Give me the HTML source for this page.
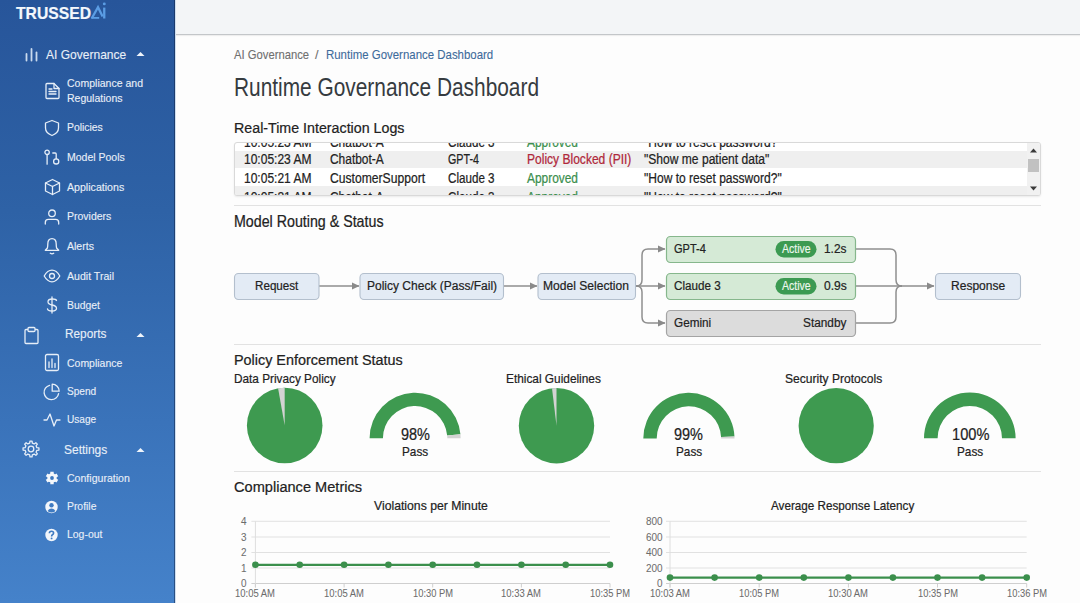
<!DOCTYPE html><html><head><meta charset="utf-8"><style>
*{margin:0;padding:0;box-sizing:border-box}
html,body{width:1080px;height:603px;overflow:hidden;background:#fdfdfd;font-family:"Liberation Sans",sans-serif}
.t{position:absolute;white-space:nowrap;line-height:1;transform-origin:0 0;-webkit-text-stroke:0.22px currentColor}
.ab{position:absolute;overflow:visible}
#sb{position:absolute;left:0;top:0;width:175px;height:603px;background:linear-gradient(180deg,#27559a 0%,#2e62a6 35%,#3a73ba 70%,#4582ca 100%);border-right:1px solid rgba(15,30,60,0.5)}
#vl{position:absolute;left:175px;top:0;width:1px;height:603px;background:#cfdff1}
#hdr{position:absolute;left:176px;top:0;width:904px;height:35px;background:#f3f5f7;border-bottom:1px solid #c3c6c9;box-shadow:0 1px 1px rgba(0,0,0,0.06)}
#logs{position:absolute;left:234px;top:142px;width:807px;height:54px;overflow:hidden;background:#fff;border:1px solid #d9d9d9;border-radius:3px;box-shadow:0 1px 2px rgba(0,0,0,0.08)}
#logs .t{}
.rowbg{position:absolute;left:0;width:100%;background:#efefef}
#sbtrack{position:absolute;left:792px;top:0;width:13px;height:54px;background:#f1f1f1}
#sbthumb{position:absolute;left:793px;top:16px;width:11px;height:13px;background:#c1c1c1}
.hr{position:absolute;left:234px;width:807px;height:1px;background:#e2e2e2}
</style></head><body><div id="sb"></div>
<div class="t" style="left:16.00px;top:5.21px;font-size:17.00px;color:#f4f8fc;transform:scaleX(0.9233);font-weight:bold;-webkit-text-stroke:0.2px;">TRUSSED</div>
<svg class="ab" style="left:0;top:0" width="120" height="30" viewBox="0 0 120 30">
<path d="M91.8 18.2 L98 7.3 L102.6 16.6" fill="none" stroke="#5b9de4" stroke-width="2.3" stroke-linejoin="miter"/>
<path d="M91.2 17.9 H99.2" stroke="#5b9de4" stroke-width="1.8"/>
<rect x="103.1" y="7.6" width="2.3" height="10.9" fill="#5b9de4"/>
<circle cx="104.3" cy="3.9" r="1.45" fill="#5b9de4"/>
</svg>
<div class="t" style="left:45.90px;top:47.62px;font-size:13.20px;color:#e8eff8;transform:scaleX(0.9120);-webkit-text-stroke:0.12px;">AI Governance</div>
<svg class="ab" style="left:136px;top:51px" width="9" height="6" viewBox="0 0 9 6"><path d="M0.5 5 L4.5 1 L8.5 5 Z" fill="#f0f5fb"/></svg>
<svg class="ab" style="left:24px;top:47px" width="15" height="15" viewBox="0 0 15 15">
<g stroke="#c9daee" stroke-width="1.8" stroke-linecap="round"><path d="M2.5 7 V13.5"/><path d="M7.5 2 V13.5"/><path d="M12.5 5.5 V13.5"/></g></svg>
<div class="t" style="left:67.10px;top:77.86px;font-size:11.50px;color:#e8eff8;transform:scaleX(0.9145);-webkit-text-stroke:0.12px;">Compliance and</div>
<div class="t" style="left:67.10px;top:93.16px;font-size:11.50px;color:#e8eff8;transform:scaleX(0.9138);-webkit-text-stroke:0.12px;">Regulations</div>
<div class="t" style="left:67.10px;top:121.96px;font-size:11.50px;color:#e8eff8;transform:scaleX(0.9034);-webkit-text-stroke:0.12px;">Policies</div>
<div class="t" style="left:67.10px;top:151.76px;font-size:11.50px;color:#e8eff8;transform:scaleX(0.9133);-webkit-text-stroke:0.12px;">Model Pools</div>
<div class="t" style="left:67.10px;top:181.66px;font-size:11.50px;color:#e8eff8;transform:scaleX(0.9224);-webkit-text-stroke:0.12px;">Applications</div>
<div class="t" style="left:67.10px;top:211.36px;font-size:11.50px;color:#e8eff8;transform:scaleX(0.9120);-webkit-text-stroke:0.12px;">Providers</div>
<div class="t" style="left:67.10px;top:240.76px;font-size:11.50px;color:#e8eff8;transform:scaleX(0.9151);-webkit-text-stroke:0.12px;">Alerts</div>
<div class="t" style="left:67.10px;top:270.56px;font-size:11.50px;color:#e8eff8;transform:scaleX(0.9192);-webkit-text-stroke:0.12px;">Audit Trail</div>
<div class="t" style="left:67.10px;top:300.06px;font-size:11.50px;color:#e8eff8;transform:scaleX(0.9026);-webkit-text-stroke:0.12px;">Budget</div>
<div class="t" style="left:65.20px;top:327.45px;font-size:13.40px;color:#e8eff8;transform:scaleX(0.8824);-webkit-text-stroke:0.12px;">Reports</div>
<svg class="ab" style="left:136px;top:332px" width="9" height="6" viewBox="0 0 9 6"><path d="M0.5 5 L4.5 1 L8.5 5 Z" fill="#f0f5fb"/></svg>
<div class="t" style="left:67.00px;top:357.56px;font-size:11.50px;color:#e8eff8;transform:scaleX(0.9107);-webkit-text-stroke:0.12px;">Compliance</div>
<div class="t" style="left:67.00px;top:385.86px;font-size:11.50px;color:#e8eff8;transform:scaleX(0.8781);-webkit-text-stroke:0.12px;">Spend</div>
<div class="t" style="left:67.00px;top:414.16px;font-size:11.50px;color:#e8eff8;transform:scaleX(0.8784);-webkit-text-stroke:0.12px;">Usage</div>
<div class="t" style="left:64.10px;top:442.55px;font-size:13.40px;color:#e8eff8;transform:scaleX(0.8943);-webkit-text-stroke:0.12px;">Settings</div>
<svg class="ab" style="left:136px;top:447px" width="9" height="6" viewBox="0 0 9 6"><path d="M0.5 5 L4.5 1 L8.5 5 Z" fill="#f0f5fb"/></svg>
<div class="t" style="left:67.10px;top:473.16px;font-size:11.50px;color:#e8eff8;transform:scaleX(0.9181);-webkit-text-stroke:0.12px;">Configuration</div>
<div class="t" style="left:67.10px;top:501.16px;font-size:11.50px;color:#e8eff8;transform:scaleX(0.9019);-webkit-text-stroke:0.12px;">Profile</div>
<div class="t" style="left:67.10px;top:529.36px;font-size:11.50px;color:#e8eff8;transform:scaleX(0.9076);-webkit-text-stroke:0.12px;">Log-out</div>
<svg class="ab" style="left:44.0px;top:82.0px" width="17" height="18" viewBox="0 0 17 18"><g stroke="#e6eef8" fill="none" stroke-width="1.3" stroke-linecap="round" stroke-linejoin="round"><path d="M2 2.5 Q2 1.5 3 1.5 H10 L15 6.5 V15.5 Q15 16.5 14 16.5 H3 Q2 16.5 2 15.5 Z"/><path d="M10 1.5 V6.5 H15"/><path d="M5 9.5 H12 M5 12 H12 M5 7 H8"/></g></svg>
<svg class="ab" style="left:44.0px;top:119.0px" width="16" height="18" viewBox="0 0 16 18"><path stroke="#e6eef8" fill="none" stroke-width="1.3" stroke-linecap="round" stroke-linejoin="round" d="M8 1.5 L14.5 4 V9 Q14.5 14 8 16.5 Q1.5 14 1.5 9 V4 Z"/></svg>
<svg class="ab" style="left:44.0px;top:149.0px" width="17" height="17" viewBox="0 0 17 17"><g stroke="#e6eef8" fill="none" stroke-width="1.3" stroke-linecap="round" stroke-linejoin="round"><circle cx="3.1" cy="3.3" r="2.2"/><path d="M3.1 5.5 V15.2"/><circle cx="12.2" cy="12.4" r="2.6"/><path d="M8.8 4 H11.2 Q12.2 4 12.2 5 V9.8"/></g></svg>
<svg class="ab" style="left:44.0px;top:178.0px" width="17" height="18" viewBox="0 0 17 18"><g stroke="#e6eef8" fill="none" stroke-width="1.3" stroke-linecap="round" stroke-linejoin="round"><path d="M8.5 1.5 L15.5 5 V13 L8.5 16.5 L1.5 13 V5 Z"/><path d="M1.5 5 L8.5 8.5 L15.5 5 M8.5 8.5 V16.5"/></g></svg>
<svg class="ab" style="left:44.0px;top:209.0px" width="16" height="16" viewBox="0 0 16 16"><g stroke="#e6eef8" fill="none" stroke-width="1.3" stroke-linecap="round" stroke-linejoin="round"><circle cx="8" cy="4.3" r="3.3"/><path d="M1.3 15 V13.5 Q1.3 10.4 4.4 10.4 H11.6 Q14.7 10.4 14.7 13.5 V15"/></g></svg>
<svg class="ab" style="left:44.0px;top:237.0px" width="16" height="18" viewBox="0 0 16 18"><g stroke="#e6eef8" fill="none" stroke-width="1.3" stroke-linecap="round" stroke-linejoin="round"><path d="M1.3 13.3 H14.7 L12.6 11 Q12.2 9.5 12.2 7 Q12.2 1.6 8 1.6 Q3.8 1.6 3.8 7 Q3.8 9.5 3.4 11 Z"/><path d="M6.3 16.3 Q8 17.3 9.7 16.3"/></g></svg>
<svg class="ab" style="left:43.0px;top:269.0px" width="18" height="14" viewBox="0 0 18 14"><g stroke="#e6eef8" fill="none" stroke-width="1.3" stroke-linecap="round" stroke-linejoin="round"><path d="M1.2 7 Q4.5 1.2 9 1.2 Q13.5 1.2 16.8 7 Q13.5 12.8 9 12.8 Q4.5 12.8 1.2 7 Z"/><circle cx="9" cy="7" r="2.5"/></g></svg>
<svg class="ab" style="left:45.0px;top:296.0px" width="14" height="18" viewBox="0 0 14 18"><g stroke="#e6eef8" fill="none" stroke-width="1.3" stroke-linecap="round" stroke-linejoin="round"><path d="M7 1 V17"/><path d="M11.5 4.5 Q11 3 7.5 3 Q3 3 3 5.8 Q3 8.3 7 9 Q11.5 9.7 11.5 12.3 Q11.5 15 7 15 Q3 15 2.5 13"/></g></svg>
<svg class="ab" style="left:23.0px;top:326.0px" width="17" height="19" viewBox="0 0 17 19"><g stroke="#e6eef8" fill="none" stroke-width="1.3" stroke-linecap="round" stroke-linejoin="round"><path d="M4.5 3.5 H3 Q2 3.5 2 4.5 V16.5 Q2 17.5 3 17.5 H14 Q15 17.5 15 16.5 V4.5 Q15 3.5 14 3.5 H12.5"/><rect x="5" y="1.5" width="7" height="4" rx="1"/></g></svg>
<svg class="ab" style="left:44.0px;top:353.0px" width="16" height="19" viewBox="0 0 16 19"><g stroke="#e6eef8" fill="none" stroke-width="1.3" stroke-linecap="round" stroke-linejoin="round"><rect x="1.5" y="1.5" width="13" height="16" rx="1.5"/><path d="M5 14.5 V9 M8 14.5 V6 M11 14.5 V10.5"/></g></svg>
<svg class="ab" style="left:43.0px;top:383.0px" width="18" height="18" viewBox="0 0 18 18"><g stroke="#e6eef8" fill="none" stroke-width="1.3" stroke-linecap="round" stroke-linejoin="round"><path d="M6.6 2.3 A7.3 7.3 0 1 0 15.6 10.6"/><path d="M9.2 8.2 V1.2 A7 7 0 0 1 16.2 8.2 Z"/></g></svg>
<svg class="ab" style="left:43.0px;top:412.0px" width="18" height="16" viewBox="0 0 18 16"><path stroke="#e6eef8" fill="none" stroke-width="1.3" stroke-linecap="round" stroke-linejoin="round" d="M1 8 H4 L7 2 L11 14 L13.5 8 H17"/></svg>
<svg class="ab" style="left:22.0px;top:440.0px" width="18" height="18" viewBox="0 0 18 18"><g stroke="#e6eef8" fill="none" stroke-width="1.3" stroke-linecap="round" stroke-linejoin="round"><path d="M7.69 3.14 L7.96 1.07 L10.04 1.07 L10.31 3.14 L12.21 3.93 L13.88 2.66 L15.34 4.12 L14.07 5.79 L14.86 7.69 L16.93 7.96 L16.93 10.04 L14.86 10.31 L14.07 12.21 L15.34 13.88 L13.88 15.34 L12.21 14.07 L10.31 14.86 L10.04 16.93 L7.96 16.93 L7.69 14.86 L5.79 14.07 L4.12 15.34 L2.66 13.88 L3.93 12.21 L3.14 10.31 L1.07 10.04 L1.07 7.96 L3.14 7.69 L3.93 5.79 L2.66 4.12 L4.12 2.66 L5.79 3.93 Z"/><circle cx="9" cy="9" r="2.8"/></g></svg>
<svg class="ab" style="left:45.0px;top:470.5px" width="14" height="14" viewBox="0 0 14 14"><g stroke="#f4f7fb" stroke-width="3.4" stroke-linecap="butt"><path d="M7 0.8 V13.2 M1.63 3.9 L12.37 10.1 M12.37 3.9 L1.63 10.1"/></g><circle cx="7" cy="7" r="4.7" fill="#f4f7fb"/><circle cx="7" cy="7" r="1.9" fill="#3c78c0"/></svg>
<svg class="ab" style="left:45.0px;top:500.0px" width="13" height="14" viewBox="0 0 13 14"><circle cx="6.5" cy="7" r="6.2" fill="#f2f6fb"/><circle cx="6.5" cy="5.2" r="2.2" fill="#3f7bc2"/><path d="M2.6 11 Q3.5 8.5 6.5 8.5 Q9.5 8.5 10.4 11 Q8.8 12.5 6.5 12.5 Q4.2 12.5 2.6 11 Z" fill="#3f7bc2"/></svg>
<svg class="ab" style="left:45.0px;top:528.0px" width="13" height="14" viewBox="0 0 13 14"><circle cx="6.5" cy="7" r="6.2" fill="#f2f6fb"/><path d="M4.4 5.3 Q4.4 3.3 6.5 3.3 Q8.6 3.3 8.6 5.1 Q8.6 6.2 7.4 6.8 Q6.6 7.3 6.6 8.5" stroke="#3f7bc2" stroke-width="1.6" fill="none"/><circle cx="6.6" cy="10.4" r="0.95" fill="#3f7bc2"/></svg>
<div id="hdr"></div><div id="vl"></div>
<div class="t" style="left:234.00px;top:48.75px;font-size:12.70px;color:#6f6f6f;transform:scaleX(0.8877);-webkit-text-stroke:0.1px;">AI Governance</div>
<div class="t" style="left:315.00px;top:48.75px;font-size:12.70px;color:#6f6f6f;-webkit-text-stroke:0.1px;">/</div>
<div class="t" style="left:325.60px;top:48.75px;font-size:12.70px;color:#3d6b9b;transform:scaleX(0.9016);-webkit-text-stroke:0.1px;">Runtime Governance Dashboard</div>
<div class="t" style="left:234.00px;top:75.43px;font-size:25.00px;color:#363b40;transform:scaleX(0.8345);-webkit-text-stroke:0;">Runtime Governance Dashboard</div>
<div class="t" style="left:234.00px;top:120.25px;font-size:15.30px;color:#222;transform:scaleX(0.9311);">Real-Time Interaction Logs</div>
<div id="logs">
<div class="rowbg" style="top:7.5px;height:17.5px"></div>
<div class="rowbg" style="top:43px;height:12px"></div>
<div class="t" style="left:9.40px;top:-7.38px;font-size:13.80px;color:#222;transform:scaleX(0.8711);">10:05:23 AM</div>
<div class="t" style="left:94.50px;top:-7.38px;font-size:13.80px;color:#222;transform:scaleX(0.8643);">Chatbot-A</div>
<div class="t" style="left:213.30px;top:-7.38px;font-size:13.80px;color:#222;transform:scaleX(0.8436);">Claude 3</div>
<div class="t" style="left:292.30px;top:-7.38px;font-size:13.80px;color:#3b8f4e;transform:scaleX(0.8633);">Approved</div>
<div class="t" style="left:409.00px;top:-7.38px;font-size:13.80px;color:#222;transform:scaleX(0.8724);">&quot;How to reset password?&quot;</div>
<div class="t" style="left:9.40px;top:10.22px;font-size:13.80px;color:#222;transform:scaleX(0.8711);">10:05:23 AM</div>
<div class="t" style="left:94.50px;top:10.22px;font-size:13.80px;color:#222;transform:scaleX(0.8643);">Chatbot-A</div>
<div class="t" style="left:213.30px;top:10.22px;font-size:13.80px;color:#222;transform:scaleX(0.7774);">GPT-4</div>
<div class="t" style="left:292.30px;top:10.22px;font-size:13.80px;color:#b0283a;transform:scaleX(0.8726);">Policy Blocked (PII)</div>
<div class="t" style="left:409.00px;top:10.22px;font-size:13.80px;color:#222;transform:scaleX(0.8745);">&quot;Show me patient data&quot;</div>
<div class="t" style="left:9.40px;top:29.12px;font-size:13.80px;color:#222;transform:scaleX(0.8711);">10:05:21 AM</div>
<div class="t" style="left:94.50px;top:29.12px;font-size:13.80px;color:#222;transform:scaleX(0.8793);">CustomerSupport</div>
<div class="t" style="left:213.30px;top:29.12px;font-size:13.80px;color:#222;transform:scaleX(0.8436);">Claude 3</div>
<div class="t" style="left:292.30px;top:29.12px;font-size:13.80px;color:#3b8f4e;transform:scaleX(0.8633);">Approved</div>
<div class="t" style="left:409.00px;top:29.12px;font-size:13.80px;color:#222;transform:scaleX(0.8724);">&quot;How to reset password?&quot;</div>
<div class="t" style="left:9.40px;top:48.02px;font-size:13.80px;color:#222;transform:scaleX(0.8711);">10:05:21 AM</div>
<div class="t" style="left:94.50px;top:48.02px;font-size:13.80px;color:#222;transform:scaleX(0.8643);">Chatbot-A</div>
<div class="t" style="left:213.30px;top:48.02px;font-size:13.80px;color:#222;transform:scaleX(0.8436);">Claude 3</div>
<div class="t" style="left:292.30px;top:48.02px;font-size:13.80px;color:#3b8f4e;transform:scaleX(0.8633);">Approved</div>
<div class="t" style="left:409.00px;top:48.02px;font-size:13.80px;color:#222;transform:scaleX(0.8724);">&quot;How to reset password?&quot;</div>
<div id="sbtrack"></div><div id="sbthumb"></div>
<svg class="ab" style="left:795px;top:5px" width="7" height="5" viewBox="0 0 7 5"><path d="M0 4.5 L3.5 0.5 L7 4.5 Z" fill="#3a3a3a"/></svg>
<svg class="ab" style="left:795px;top:43px" width="7" height="5" viewBox="0 0 7 5"><path d="M0 0.5 L3.5 4.5 L7 0.5 Z" fill="#3a3a3a"/></svg>
</div>
<div class="hr" style="top:205.0px"></div>
<div class="t" style="left:234.30px;top:213.94px;font-size:15.90px;color:#222;transform:scaleX(0.8956);">Model Routing &amp; Status</div>
<svg class="ab" style="left:0;top:0" width="1080" height="603" viewBox="0 0 1080 603">
<defs><marker id="ah" markerWidth="8" markerHeight="8" refX="7" refY="4" orient="auto" markerUnits="userSpaceOnUse"><path d="M0 0.5 L7.5 4 L0 7.5 Z" fill="#8a8a8a"/></marker></defs>
<g fill="none" stroke="#8e8e8e" stroke-width="1.5">
<path d="M319 286 H359" marker-end="url(#ah)"/>
<path d="M504 286 H537" marker-end="url(#ah)"/>
<path d="M636 286 H665" marker-end="url(#ah)"/>
<path d="M636 286 Q642 286 642 280 V255 Q642 249 648 249 H665" marker-end="url(#ah)"/>
<path d="M636 286 Q642 286 642 292 V317 Q642 323 648 323 H665" marker-end="url(#ah)"/>
<path d="M856 249 H890 Q896 249 896 255 V280 Q896 286 902 286"/>
<path d="M856 323 H890 Q896 323 896 317 V292 Q896 286 902 286"/>
<path d="M856 286 H934" marker-end="url(#ah)"/>
</g>
<g stroke-width="1">
<rect x="234.5" y="273.5" width="84.5" height="26" rx="4" fill="#e3ebf5" stroke="#b3bfcd" stroke-width="1.1"/>
<rect x="360" y="273.5" width="143.5" height="26" rx="4" fill="#e3ebf5" stroke="#b3bfcd" stroke-width="1.1"/>
<rect x="538" y="273.5" width="97.5" height="26" rx="4" fill="#e3ebf5" stroke="#b3bfcd" stroke-width="1.1"/>
<rect x="935.5" y="273.5" width="85" height="26" rx="4" fill="#e3ebf5" stroke="#b3bfcd" stroke-width="1.1"/>
<rect x="666.5" y="236.5" width="189" height="26" rx="4" fill="#d5ead6" stroke="#86b78c" stroke-width="1.2"/>
<rect x="666.5" y="273.5" width="189" height="26" rx="4" fill="#d5ead6" stroke="#86b78c" stroke-width="1.2"/>
<rect x="666.5" y="310.5" width="189" height="26" rx="4" fill="#dcdcdc" stroke="#a4a4a4" stroke-width="1.2"/>
<rect x="775.5" y="241" width="41" height="16.5" rx="8.25" fill="#3c9a52"/>
<rect x="775.5" y="278" width="41" height="16.5" rx="8.25" fill="#3c9a52"/>
</g>
</svg>
<div class="t" style="left:254.80px;top:279.20px;font-size:13.70px;color:#222;transform:scaleX(0.8505);">Request</div>
<div class="t" style="left:366.50px;top:279.20px;font-size:13.70px;color:#222;transform:scaleX(0.8770);">Policy Check (Pass/Fail)</div>
<div class="t" style="left:543.20px;top:279.20px;font-size:13.70px;color:#222;transform:scaleX(0.8822);">Model Selection</div>
<div class="t" style="left:950.76px;top:279.20px;font-size:13.70px;color:#222;transform:scaleX(0.8800);">Response</div>
<div class="t" style="left:674.30px;top:242.40px;font-size:13.70px;color:#222;transform:scaleX(0.8033);">GPT-4</div>
<div class="t" style="left:674.30px;top:279.20px;font-size:13.70px;color:#222;transform:scaleX(0.8516);">Claude 3</div>
<div class="t" style="left:674.30px;top:316.30px;font-size:13.70px;color:#222;transform:scaleX(0.8572);">Gemini</div>
<div class="t" style="left:824.30px;top:242.40px;font-size:13.70px;color:#222;transform:scaleX(0.8689);">1.2s</div>
<div class="t" style="left:824.00px;top:279.20px;font-size:13.70px;color:#222;transform:scaleX(0.8805);">0.9s</div>
<div class="t" style="left:803.40px;top:316.30px;font-size:13.70px;color:#222;transform:scaleX(0.8633);">Standby</div>
<div class="t" style="left:782.00px;top:243.30px;font-size:12.40px;color:#eef8ef;transform:scaleX(0.8470);-webkit-text-stroke:0.15px;">Active</div>
<div class="t" style="left:782.00px;top:280.10px;font-size:12.40px;color:#eef8ef;transform:scaleX(0.8470);-webkit-text-stroke:0.15px;">Active</div>
<div class="hr" style="top:343.5px"></div>
<div class="t" style="left:234.00px;top:351.83px;font-size:15.20px;color:#222;transform:scaleX(0.9469);">Policy Enforcement Status</div>
<div class="t" style="left:234.00px;top:371.68px;font-size:13.60px;color:#222;transform:scaleX(0.8673);">Data Privacy Policy</div>
<div class="t" style="left:506.10px;top:372.28px;font-size:13.60px;color:#222;transform:scaleX(0.8718);">Ethical Guidelines</div>
<div class="t" style="left:785.20px;top:371.78px;font-size:13.60px;color:#222;transform:scaleX(0.8878);">Security Protocols</div>
<svg class="ab" style="left:0;top:0" width="1080" height="603" viewBox="0 0 1080 603"><circle cx="284.7" cy="425.5" r="37.8" fill="#3e9a50"/><path d="M284.70 425.50 L284.70 387.70 A37.80 37.80 0 0 0 278.08 388.28 Z" fill="#d3d3d3"/><circle cx="556.5" cy="425.7" r="37.7" fill="#3e9a50"/><path d="M556.50 425.70 L556.50 388.00 A37.70 37.70 0 0 0 552.01 388.27 Z" fill="#d3d3d3"/><circle cx="836.2" cy="425.7" r="37.6" fill="#3e9a50"/><path d="M369.60 438.20 A45.50 45.50 0 0 1 460.44 434.35 L447.18 435.47 A32.20 32.20 0 0 0 382.90 438.20 Z" fill="#3e9a50"/><path d="M460.44 434.35 A45.50 45.50 0 0 1 460.60 438.20 L447.30 438.20 A32.20 32.20 0 0 0 447.18 435.47 Z" fill="#d3d3d3"/><path d="M643.30 438.40 A45.60 45.60 0 0 1 734.46 436.54 L721.07 437.09 A32.20 32.20 0 0 0 656.70 438.40 Z" fill="#3e9a50"/><path d="M734.46 436.54 A45.60 45.60 0 0 1 734.50 438.40 L721.10 438.40 A32.20 32.20 0 0 0 721.07 437.09 Z" fill="#d3d3d3"/><path d="M924.00 438.30 A45.80 45.80 0 0 1 1015.60 438.30 L1002.00 438.30 A32.20 32.20 0 0 0 937.60 438.30 Z" fill="#3e9a50"/></svg>
<div class="t" style="left:400.90px;top:426.69px;font-size:15.60px;color:#222;transform:scaleX(0.9288);">98%</div>
<div class="t" style="left:402.00px;top:444.92px;font-size:13.20px;color:#222;transform:scaleX(0.8928);">Pass</div>
<div class="t" style="left:674.40px;top:426.69px;font-size:15.60px;color:#222;transform:scaleX(0.9288);">99%</div>
<div class="t" style="left:675.80px;top:444.92px;font-size:13.20px;color:#222;transform:scaleX(0.8928);">Pass</div>
<div class="t" style="left:951.50px;top:426.69px;font-size:15.60px;color:#222;transform:scaleX(0.9374);">100%</div>
<div class="t" style="left:956.70px;top:444.92px;font-size:13.20px;color:#222;transform:scaleX(0.8928);">Pass</div>
<div class="hr" style="top:470.5px"></div>
<div class="t" style="left:233.90px;top:479.05px;font-size:15.30px;color:#222;transform:scaleX(0.9536);">Compliance Metrics</div>
<div class="t" style="left:374.00px;top:498.82px;font-size:13.20px;color:#222;transform:scaleX(0.9266);">Violations per Minute</div>
<div class="t" style="left:770.50px;top:498.82px;font-size:13.20px;color:#222;transform:scaleX(0.8856);">Average Response Latency</div>
<svg class="ab" style="left:0;top:0" width="1080" height="603" viewBox="0 0 1080 603"><g stroke="#e1e1e1" stroke-width="1"><path d="M251.4 521.3 H610.0"/><path d="M251.4 537.0 H610.0"/><path d="M251.4 552.5 H610.0"/><path d="M251.4 568.0 H610.0"/></g><g stroke="#cfcfcf" stroke-width="1"><path d="M251.4 583.5 H610.0"/><path d="M255.4 521.3 V587.5" stroke="#dedede"/><path d="M255.4 583.5 V587.5"/><path d="M344.1 583.5 V587.5"/><path d="M432.7 583.5 V587.5"/><path d="M521.4 583.5 V587.5"/><path d="M610.0 583.5 V587.5"/></g><path d="M255.4 564.8 H610.0" stroke="#3b8f4c" stroke-width="2.2"/><circle cx="255.4" cy="564.8" r="3.3" fill="#3b8f4c"/><circle cx="299.7" cy="564.8" r="3.3" fill="#3b8f4c"/><circle cx="344.1" cy="564.8" r="3.3" fill="#3b8f4c"/><circle cx="388.4" cy="564.8" r="3.3" fill="#3b8f4c"/><circle cx="432.7" cy="564.8" r="3.3" fill="#3b8f4c"/><circle cx="477.0" cy="564.8" r="3.3" fill="#3b8f4c"/><circle cx="521.4" cy="564.8" r="3.3" fill="#3b8f4c"/><circle cx="565.7" cy="564.8" r="3.3" fill="#3b8f4c"/><circle cx="610.0" cy="564.8" r="3.3" fill="#3b8f4c"/></svg>
<div class="t" style="left:241.47px;top:515.86px;font-size:10.80px;color:#6c6c6c;transform:scaleX(0.9200);-webkit-text-stroke:0.05px;">4</div>
<div class="t" style="left:241.47px;top:531.56px;font-size:10.80px;color:#6c6c6c;transform:scaleX(0.9200);-webkit-text-stroke:0.05px;">3</div>
<div class="t" style="left:241.47px;top:547.06px;font-size:10.80px;color:#6c6c6c;transform:scaleX(0.9200);-webkit-text-stroke:0.05px;">2</div>
<div class="t" style="left:241.47px;top:562.56px;font-size:10.80px;color:#6c6c6c;transform:scaleX(0.9200);-webkit-text-stroke:0.05px;">1</div>
<div class="t" style="left:241.47px;top:578.06px;font-size:10.80px;color:#6c6c6c;transform:scaleX(0.9200);-webkit-text-stroke:0.05px;">0</div>
<div class="t" style="left:235.40px;top:588.99px;font-size:10.40px;color:#6c6c6c;transform:scaleX(0.9103);-webkit-text-stroke:0.05px;">10:05 AM</div>
<div class="t" style="left:324.05px;top:588.99px;font-size:10.40px;color:#6c6c6c;transform:scaleX(0.9103);-webkit-text-stroke:0.05px;">10:05 AM</div>
<div class="t" style="left:412.70px;top:588.99px;font-size:10.40px;color:#6c6c6c;transform:scaleX(0.8986);-webkit-text-stroke:0.05px;">10:30 PM</div>
<div class="t" style="left:501.35px;top:588.99px;font-size:10.40px;color:#6c6c6c;transform:scaleX(0.9103);-webkit-text-stroke:0.05px;">10:33 AM</div>
<div class="t" style="left:590.00px;top:588.99px;font-size:10.40px;color:#6c6c6c;transform:scaleX(0.8986);-webkit-text-stroke:0.05px;">10:35 PM</div>
<svg class="ab" style="left:0;top:0" width="1080" height="603" viewBox="0 0 1080 603"><g stroke="#e1e1e1" stroke-width="1"><path d="M666.0 521.3 H1026.7"/><path d="M666.0 537.0 H1026.7"/><path d="M666.0 552.5 H1026.7"/><path d="M666.0 568.0 H1026.7"/></g><g stroke="#cfcfcf" stroke-width="1"><path d="M666.0 583.5 H1026.7"/><path d="M670.0 521.3 V587.5" stroke="#dedede"/><path d="M670.0 583.5 V587.5"/><path d="M759.2 583.5 V587.5"/><path d="M848.4 583.5 V587.5"/><path d="M937.5 583.5 V587.5"/><path d="M1026.7 583.5 V587.5"/></g><path d="M670.0 577.6 H1026.7" stroke="#3b8f4c" stroke-width="2.2"/><circle cx="670.0" cy="577.6" r="3.3" fill="#3b8f4c"/><circle cx="714.6" cy="577.6" r="3.3" fill="#3b8f4c"/><circle cx="759.2" cy="577.6" r="3.3" fill="#3b8f4c"/><circle cx="803.8" cy="577.6" r="3.3" fill="#3b8f4c"/><circle cx="848.4" cy="577.6" r="3.3" fill="#3b8f4c"/><circle cx="892.9" cy="577.6" r="3.3" fill="#3b8f4c"/><circle cx="937.5" cy="577.6" r="3.3" fill="#3b8f4c"/><circle cx="982.1" cy="577.6" r="3.3" fill="#3b8f4c"/><circle cx="1026.7" cy="577.6" r="3.3" fill="#3b8f4c"/></svg>
<div class="t" style="left:645.72px;top:515.86px;font-size:10.80px;color:#6c6c6c;transform:scaleX(0.9200);-webkit-text-stroke:0.05px;">800</div>
<div class="t" style="left:645.72px;top:531.56px;font-size:10.80px;color:#6c6c6c;transform:scaleX(0.9200);-webkit-text-stroke:0.05px;">600</div>
<div class="t" style="left:645.72px;top:547.06px;font-size:10.80px;color:#6c6c6c;transform:scaleX(0.9200);-webkit-text-stroke:0.05px;">400</div>
<div class="t" style="left:645.72px;top:562.56px;font-size:10.80px;color:#6c6c6c;transform:scaleX(0.9200);-webkit-text-stroke:0.05px;">200</div>
<div class="t" style="left:656.77px;top:578.06px;font-size:10.80px;color:#6c6c6c;transform:scaleX(0.9200);-webkit-text-stroke:0.05px;">0</div>
<div class="t" style="left:650.00px;top:588.99px;font-size:10.40px;color:#6c6c6c;transform:scaleX(0.9103);-webkit-text-stroke:0.05px;">10:03 AM</div>
<div class="t" style="left:739.17px;top:588.99px;font-size:10.40px;color:#6c6c6c;transform:scaleX(0.8986);-webkit-text-stroke:0.05px;">10:05 PM</div>
<div class="t" style="left:828.35px;top:588.99px;font-size:10.40px;color:#6c6c6c;transform:scaleX(0.9103);-webkit-text-stroke:0.05px;">10:30 AM</div>
<div class="t" style="left:917.53px;top:588.99px;font-size:10.40px;color:#6c6c6c;transform:scaleX(0.8986);-webkit-text-stroke:0.05px;">10:35 PM</div>
<div class="t" style="left:1006.70px;top:588.99px;font-size:10.40px;color:#6c6c6c;transform:scaleX(0.8986);-webkit-text-stroke:0.05px;">10:36 PM</div></body></html>
